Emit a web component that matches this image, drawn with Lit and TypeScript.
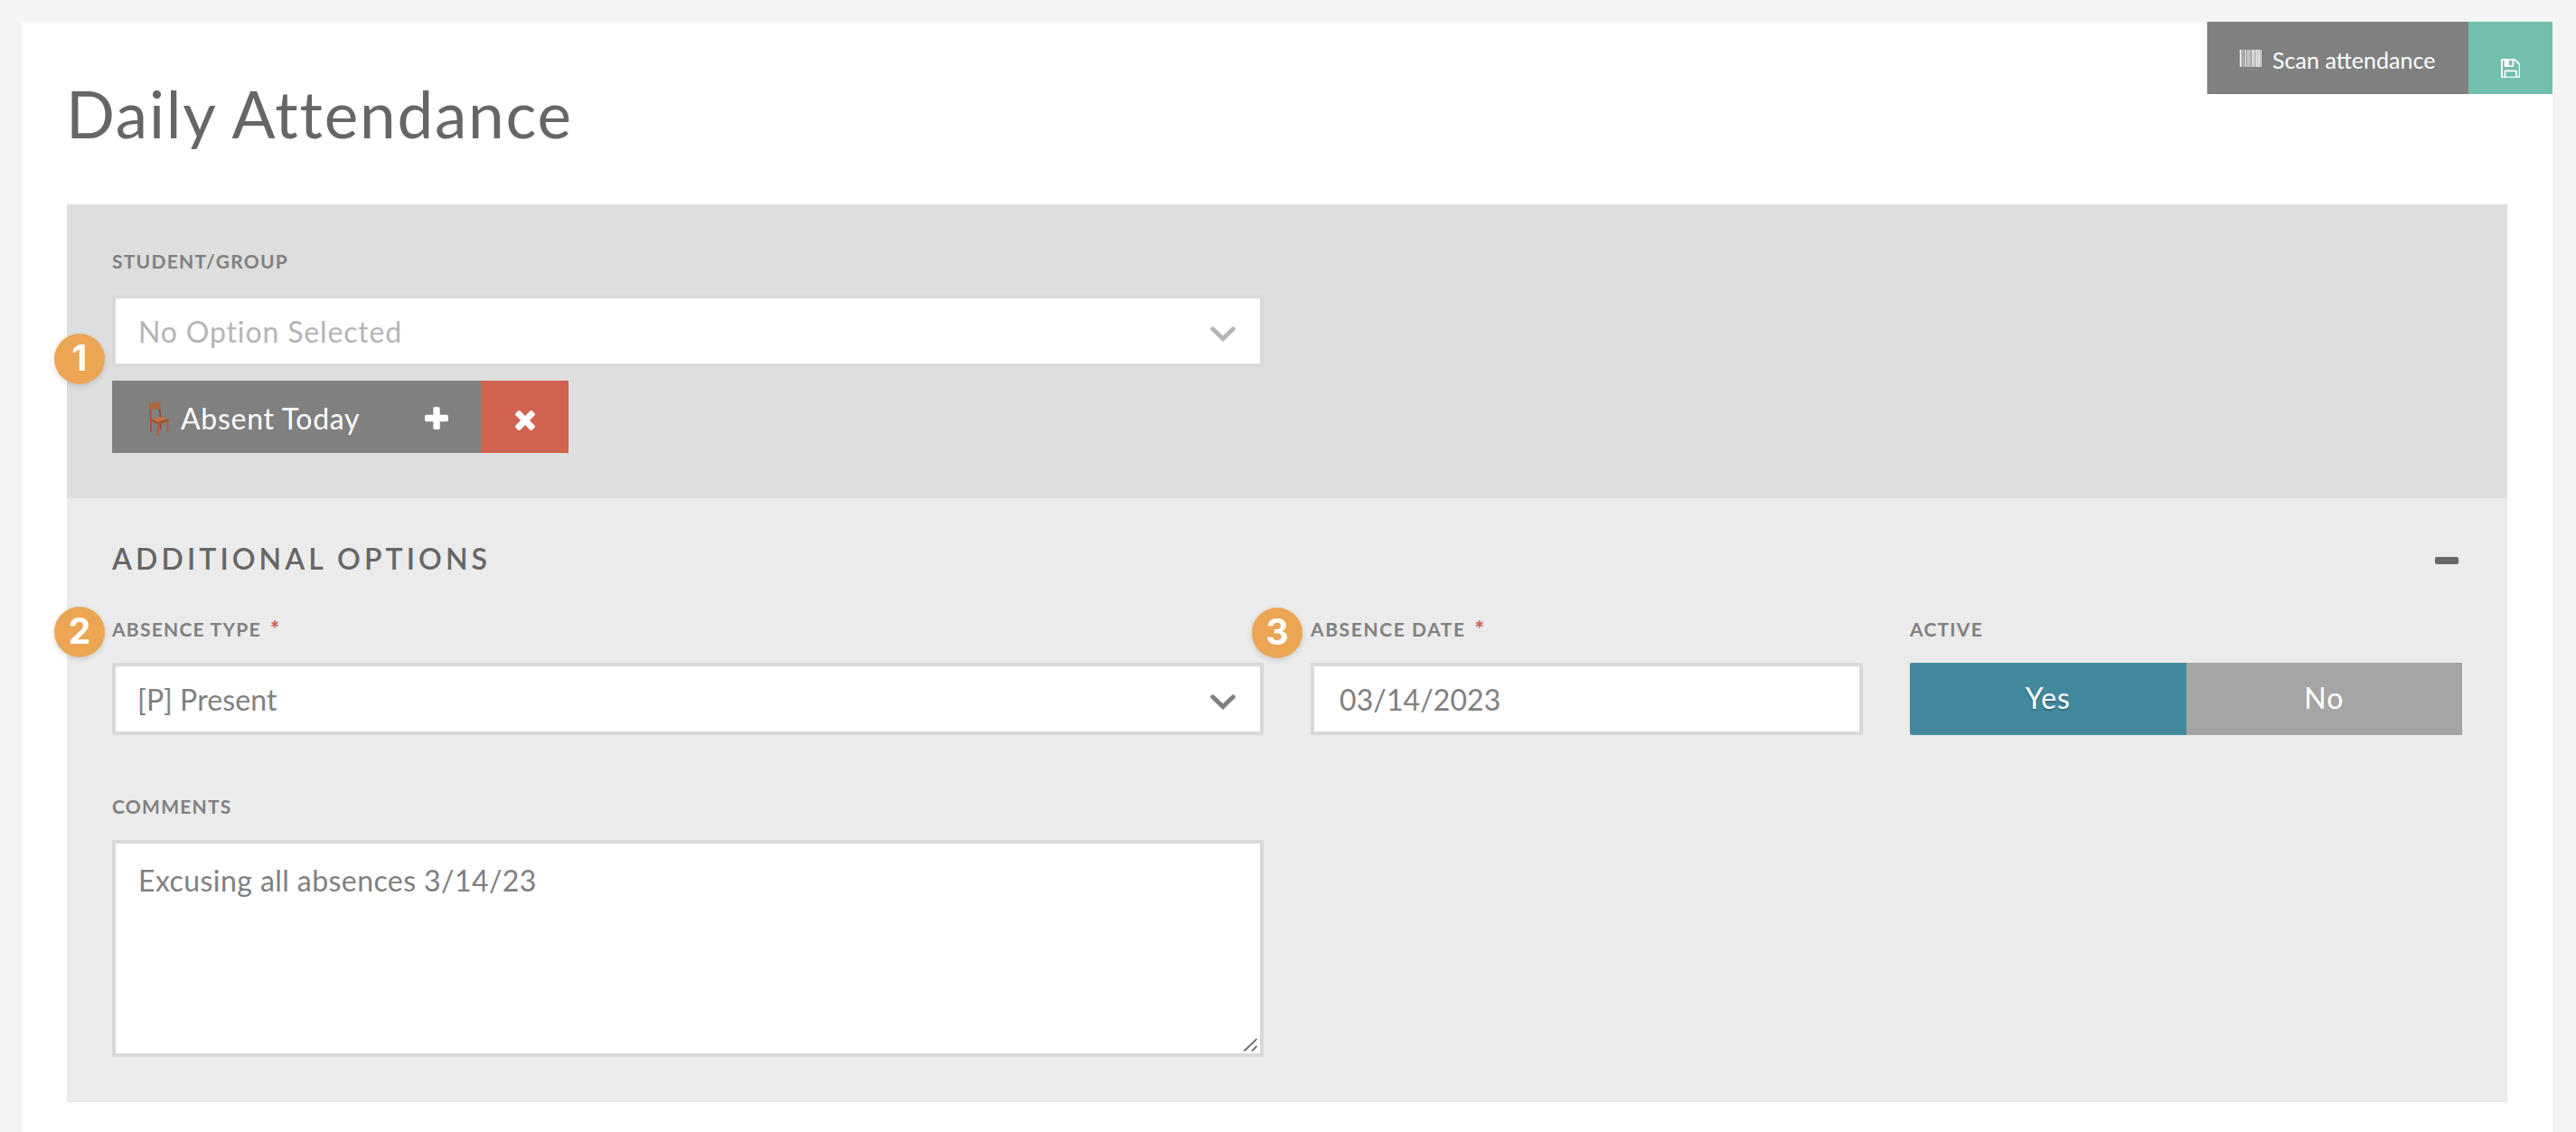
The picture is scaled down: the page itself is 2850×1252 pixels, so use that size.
import { LitElement, html, css, svg } from 'lit';
import { customElement, property, state } from 'lit/decorators.js';
import { classMap } from 'lit/directives/class-map.js';

// Barcode stripes: [x, width, opacity]
const STRIPES = [
  [0, 1, 1], [1, 2, 0.5], [3, 1, 0.2], [4, 1, 0.5], [5, 1, 0.2], [6, 1, 0.8], [7, 1, 0.25],
  [8, 4, 0.5], [12, 1, 0.2], [13, 1, 0.5], [14, 1, 0.85], [15, 3, 0.5], [18, 1, 0.8],
  [19, 2, 0.6], [21, 1, 1], [22, 1, 0.2], [23, 1, 1],
];

const chevron = html`
  <svg class="chevron" width="28" height="17" viewBox="0 0 28 17" fill="none" stroke="currentColor" stroke-width="5" stroke-linecap="round">
    <path d="M2.7 2.8L14 13.5L25.3 2.8"/>
  </svg>
`;

@customElement('step-badge')
export class StepBadge extends LitElement {
  static styles = css`
    :host {
      position: absolute;
      width: 56px;
      height: 56px;
      border-radius: 50%;
      background: #eca553;
      box-shadow: 0 2px 6px rgba(0, 0, 0, 0.14);
      color: #fff;
      font: 700 39px/54px Inter, sans-serif;
      text-align: center;
    }
  `;

  @property({ type: Number }) step = 1;

  render() {
    return html`${this.step}`;
  }
}

@customElement('app-root')
export class AppRoot extends LitElement {
  static styles = css`
    :host {
      display: block;
      box-sizing: border-box;
      min-height: 1252px;
      padding: 24px 26px 0 24px;
      background: #f4f4f4;
      font-family: Lato, sans-serif;
      font-size: 32px;
      color: #808080;
    }
    * {
      box-sizing: border-box;
    }
    svg {
      display: block;
      flex: none;
    }
    button {
      border: none;
      margin: 0;
      padding: 0;
      font: inherit;
      color: #fff;
      display: flex;
      align-items: center;
      justify-content: center;
    }
    .page {
      min-height: 1228px;
      padding: 0 50px;
      background: #fff;
    }
    .header {
      display: flex;
      justify-content: space-between;
      height: 202px;
      margin-right: -50px;
    }
    h1 {
      margin: 59px 0 0 -1px;
      font-size: 71px;
      font-weight: 400;
      line-height: 86px;
      letter-spacing: 1.8px;
      color: #666;
    }
    .actions {
      display: flex;
      height: 80px;
    }
    .scan {
      width: 289px;
      padding-top: 3px;
      justify-content: flex-start;
      padding-left: 36px;
      gap: 12px;
      background: #808080;
      font-size: 25.1px;
    }
    .scan svg {
      margin-top: -2px;
    }
    .save {
      width: 93px;
      padding-top: 23px;
      background: #72bfae;
    }
    .students {
      height: 325px;
      padding: 50px 50px 0;
      background: #dedede;
    }
    .options {
      height: 668px;
      padding: 47px 50px 0;
      background: #ebebeb;
    }
    .grid {
      display: grid;
      grid-template-columns: repeat(4, 611px);
      column-gap: 52px;
      row-gap: 66px;
    }
    .field {
      position: relative;
    }
    .half {
      grid-column: span 2;
    }
    .label {
      display: flex;
      margin-bottom: 24px;
      font-size: 21px;
      font-weight: 700;
      line-height: 26px;
      letter-spacing: 1.25px;
      text-transform: uppercase;
    }
    .label.date {
      letter-spacing: 1.6px;
    }
    .required {
      margin-left: 10px;
      color: #d0624f;
      font-size: 24px;
      font-weight: 900;
    }
    .control {
      display: flex;
      align-items: center;
      justify-content: space-between;
      width: 100%;
      height: 80px;
      padding: 0 27px 0 24px;
      border: 4px solid #d9d9d9;
      border-radius: 2px;
      background: #fff;
      color: #808080;
      font: inherit;
      letter-spacing: 0.1px;
      outline: none;
    }
    .control.empty {
      padding-left: 25px;
      color: #b5b5b5;
      letter-spacing: 0.85px;
    }
    .control .chevron {
      margin-top: 7px;
    }
    input.control {
      border-radius: 0;
      padding-left: 28px;
    }
    textarea.control {
      display: block;
      height: 240px;
      padding: 19px 25px;
      border-radius: 0;
      line-height: 44px;
      letter-spacing: 0.43px;
      resize: none;
    }
    .grip {
      position: absolute;
      right: 6px;
      bottom: 5px;
    }
    .token {
      display: flex;
      width: 505px;
      height: 80px;
      margin-top: 15px;
      color: #fff;
    }
    .token-name {
      display: flex;
      align-items: center;
      width: 408px;
      padding: 3px 36px 0 41px;
      background: #808080;
      letter-spacing: 0.72px;
    }
    .token-name .chair {
      margin: 0 13px 0 0;
    }
    .token-name .plus {
      margin-left: auto;
    }
    .remove {
      width: 97px;
      padding-top: 8px;
      background: #d0624f;
    }
    .options-head {
      display: flex;
      align-items: center;
      justify-content: space-between;
      height: 40px;
      margin-bottom: 45px;
      padding-right: 4px;
    }
    h2 {
      margin: 0;
      font-size: 32px;
      font-weight: 600;
      line-height: 40px;
      letter-spacing: 4.1px;
      color: #666;
      text-transform: uppercase;
    }
    .collapse {
      width: 26px;
      height: 8px;
      margin-top: 3px;
      border-radius: 2px;
      background: #666;
    }
    .toggle {
      display: flex;
      height: 80px;
      border-radius: 2px 0 0 2px;
      overflow: hidden;
    }
    .toggle button {
      flex: 1;
      padding-bottom: 4px;
      background: #a5a5a5;
      letter-spacing: 0.9px;
    }
    .toggle button.on {
      background: #42899e;
      text-shadow: 0 2px 2px rgba(0, 0, 0, 0.25);
    }
    .step-1 {
      left: -64px;
      top: 93px;
    }
    .step-2 {
      left: -64px;
      top: -12px;
    }
    .step-3 {
      left: -65px;
      top: -11px;
    }
  `;

  @state() private active = true;

  private renderHeader() {
    return html`
      <div class="header">
        <h1>Daily Attendance</h1>
        <div class="actions">
          <button class="scan">
            <svg width="24" height="19" viewBox="0 0 24 19" fill="#fff">
              ${STRIPES.map(([x, w, o]) => svg`<rect x=${x} y="0" width=${w} height="19" opacity=${o} />`)}
            </svg>
            Scan attendance
          </button>
          <button class="save">
            <svg width="21.5" height="21.5" viewBox="0 0 1536 1536" fill="#fff" fill-rule="evenodd">
              <path d="M384 1408h768v-384H384v384zm896 0h128V512q0-14-10-38.5t-20-34.5l-281-281q-10-10-34-20t-39-10v416q0 40-28 68t-68 28H352q-40 0-68-28t-28-68V128H128v1280h128V992q0-40 28-68t68-28h832q40 0 68 28t28 68v416zM896 480V160q0-13-9.5-22.5T864 128H672q-13 0-22.5 9.5T640 160v320q0 13 9.5 22.5T672 512h192q13 0 22.5-9.5T896 480zm640 32v928q0 40-28 68t-68 28H96q-40 0-68-28T0 1440V96q0-40 28-68T96 0h928q40 0 88 20t76 48l280 280q28 28 48 76t20 88z"/>
            </svg>
          </button>
        </div>
      </div>
    `;
  }

  private renderStudents() {
    return html`
      <div class="students">
        <div class="grid">
          <div class="field half">
            <div class="label">Student/Group</div>
            <div class="control empty">No Option Selected ${chevron}</div>
            <step-badge class="step-1" .step=${1}></step-badge>
          </div>
        </div>
        <div class="token">
          <div class="token-name">
            <svg class="chair" width="22" height="40" viewBox="0 0 22 40" fill="none">
              <path d="M11.5 9L13 22M12.5 24V32" stroke="#8a4a2b" stroke-width="1.8"/>
              <path d="M1.2 3L2.3 35" stroke="#a05632" stroke-width="2"/>
              <path d="M0.3 3L12 1.5L13 9L1 10.5Z" fill="#b0673f"/>
              <path d="M2.5 20.5L13 18L21.5 20L10 24Z" fill="#c07246"/>
              <path d="M2 20.5L10 23.5L21.500 20.3V23L10 26.5L2 23.5Z" fill="#9c5431"/>
              <path d="M9.8 25V39M20.5 22V35" stroke="#ab5f39" stroke-width="2"/>
            </svg>
            Absent Today
            <svg class="plus" width="26" height="25" viewBox="0 0 26 25" fill="#fff">
              <rect x="9.3" y="0" width="7.4" height="25" rx="1.8"/>
              <rect x="0" y="8.8" width="26" height="7.4" rx="1.8"/>
            </svg>
          </div>
          <button class="remove">
            <svg width="22" height="22" viewBox="0 0 22 22" fill="#fff">
              <rect x="-2" y="7.5" width="26" height="7" rx="1.8" transform="rotate(45 11 11)"/>
              <rect x="-2" y="7.5" width="26" height="7" rx="1.8" transform="rotate(-45 11 11)"/>
            </svg>
          </button>
        </div>
      </div>
    `;
  }

  private renderAdditional() {
    return html`
      <div class="options">
        <div class="options-head">
          <h2>Additional Options</h2>
          <div class="collapse"></div>
        </div>
        <div class="grid">
          <div class="field half">
            <div class="label">Absence Type<span class="required">*</span></div>
            <div class="control">[P] Present ${chevron}</div>
            <step-badge class="step-2" .step=${2}></step-badge>
          </div>
          <div class="field">
            <div class="label date">Absence Date<span class="required">*</span></div>
            <input class="control" type="text" .value=${'03/14/2023'}>
            <step-badge class="step-3" .step=${3}></step-badge>
          </div>
          <div class="field">
            <div class="label">Active</div>
            <div class="toggle">
              <button class=${classMap({ on: this.active })} @click=${() => (this.active = true)}>Yes</button>
              <button class=${classMap({ on: !this.active })} @click=${() => (this.active = false)}>No</button>
            </div>
          </div>
          <div class="field half">
            <div class="label">Comments</div>
            <textarea class="control" .value=${'Excusing all absences 3/14/23'}></textarea>
            <svg class="grip" width="16" height="16" viewBox="0 0 16 16" stroke="#555" stroke-width="1.6">
              <path d="M0.5 14.5L14.5 1M9 14.5L14.5 9"/>
            </svg>
          </div>
        </div>
      </div>
    `;
  }

  render() {
    return html`
      <div class="page">
        ${this.renderHeader()}
        ${this.renderStudents()}
        ${this.renderAdditional()}
      </div>
    `;
  }
}
